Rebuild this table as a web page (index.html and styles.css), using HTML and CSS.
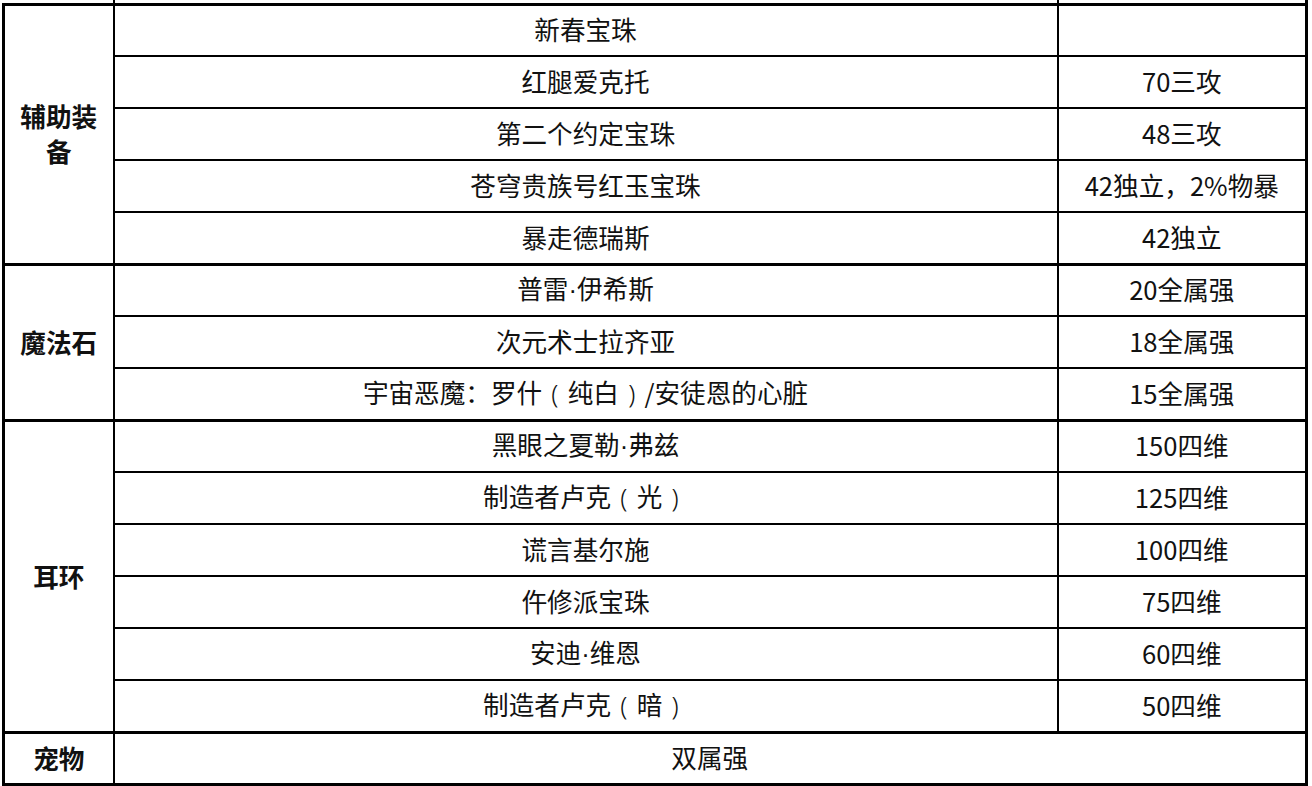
FILE: index.html
```html
<!DOCTYPE html>
<html lang="zh">
<head>
<meta charset="utf-8">
<title>装备表</title>
<link rel="stylesheet" href="styles.css">
</head>
<body>
<div class="sheet">
<table class="gear">
  <colgroup>
    <col class="c-cat">
    <col class="c-name">
    <col class="c-val">
  </colgroup>
  <tbody>
    <tr class="cut"><td class="cat"></td><td></td><td></td></tr>
    <tr class="grp"><td class="cat" rowspan="5">辅助装备</td><td>新春宝珠</td><td></td></tr>
    <tr><td>红腿爱克托</td><td>70三攻</td></tr>
    <tr><td>第二个约定宝珠</td><td>48三攻</td></tr>
    <tr><td>苍穹贵族号红玉宝珠</td><td>42独立<span class="pc">，</span>2%物暴</td></tr>
    <tr><td>暴走德瑞斯</td><td>42独立</td></tr>
    <tr class="grp"><td class="cat" rowspan="3">魔法石</td><td>普雷<span class="dot">·</span>伊希斯</td><td>20全属强</td></tr>
    <tr><td>次元术士拉齐亚</td><td>18全属强</td></tr>
    <tr><td>宇宙恶魔<span class="pc">：</span>罗什<span class="par">(</span>纯白<span class="par">)</span>/安徒恩的心脏</td><td>15全属强</td></tr>
    <tr class="grp"><td class="cat" rowspan="6">耳环</td><td>黑眼之夏勒<span class="dot">·</span>弗兹</td><td>150四维</td></tr>
    <tr><td>制造者卢克<span class="par">(</span>光<span class="par">)</span></td><td>125四维</td></tr>
    <tr><td>谎言基尔施</td><td>100四维</td></tr>
    <tr><td>仵修派宝珠</td><td>75四维</td></tr>
    <tr><td>安迪<span class="dot">·</span>维恩</td><td>60四维</td></tr>
    <tr><td>制造者卢克<span class="par">(</span>暗<span class="par">)</span></td><td>50四维</td></tr>
    <tr class="grp last"><td class="cat">宠物</td><td colspan="2">双属强</td></tr>
  </tbody>
</table>
</div>
</body>
</html>
```

FILE: styles.css
```css
html, body {
  margin: 0;
  padding: 0;
  background: #fff;
}

.sheet {
  overflow: hidden;
  height: 786px;
  padding-left: 2px;
}

.gear {
  border-collapse: collapse;
  table-layout: fixed;
  width: 1306px;
  margin-top: -48px;
  font-family: "Noto Sans CJK SC", "Noto Sans", sans-serif;
  font-size: 25.6px;
  color: #111;
}

.c-cat { width: 110px; }
.c-val { width: 249px; }

.gear td {
  height: 52px;
  padding: 0 5px 3px;
  text-align: center;
  vertical-align: middle;
  border: 2px solid #000;
  line-height: 35px;
  white-space: normal;
  box-sizing: border-box;
}

.gear td.cat {
  font-weight: bold;
  border-left: 3px solid #000;
  padding: 0 3px 2px;
}

.gear tr td:last-child {
  border-right: 3px solid #000;
}

.gear tr.grp td {
  border-top: 3px solid #000;
}

.gear tr.last td {
  border-bottom: 3px solid #000;
}

.gear tr.cut td {
  border-top: none;
}

.gear tr.cut td.cat {
  border-left: none;
}

.dot {
  font-family: "Liberation Sans", sans-serif;
}

.pc {
  font-family: "Noto Sans CJK TC", "Noto Sans CJK SC", sans-serif;
}

.par {
  display: inline-block;
  width: 1em;
  text-align: center;
  font-family: "Noto Sans", sans-serif;
  font-weight: 300;
}
```
